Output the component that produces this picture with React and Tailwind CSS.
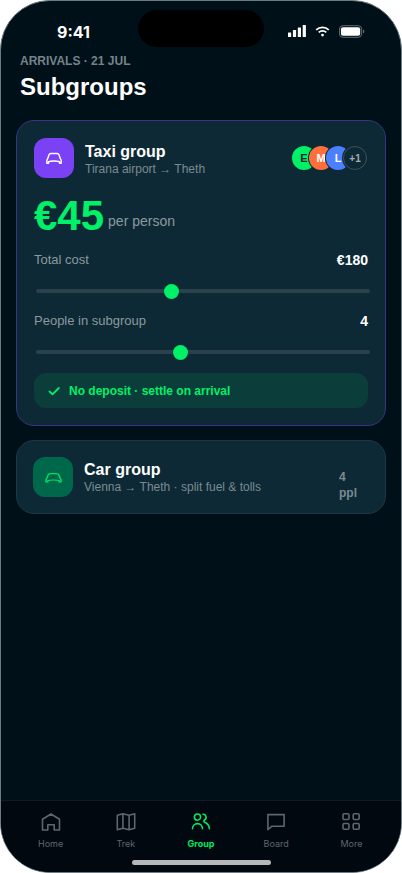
import React, { useState } from 'react';

const CarIcon = ({ className }) => (
    <svg viewBox="0 0 24 24" preserveAspectRatio="none" fill="none" stroke="currentColor" strokeWidth="1.7" strokeLinejoin="round" className={className}>
        <path d="M3.400 18.200v-2.600c0-1.200.4-2 1-2.800L6 8.200c.3-1 1.200-1.700 2.300-1.700h7.400c1.100 0 2 .7 2.300 1.700l1.600 4.600c.6.8 1 1.600 1 2.800v2.600h-2v-1.700c-2-.9-4-1-6.600-1s-4.600.1-6.600 1v1.700z" />
    </svg>
);

const HomeIcon = () => (
    <path d="M2.500 9.300 11 4l8.500 5.300V20h-5.300v-5.200H7.800V20H2.500z" />
);

const TrekIcon = () => (
    <path d="M2.300 5.200 7.900 3.700l6.200 1.500 5.600-1.500v14.600l-5.600 1.500-6.200-1.500-5.600 1.500zM7.900 3.700v14.600M14.100 5.200v14.600" />
);

const GroupIcon = () => (
    <path d="M7.500 10.200a3.100 3.100 0 1 0 0-6.200 3.100 3.100 0 0 0 0 6.200M2.500 18.800c0-3 2.200-5.200 5-5.200s5 2.200 5 5.200M13 4.300a3 3 0 0 1 1.400 5.700c-.7.5-.6 1.700.2 2.300 2.800 1 4.600 3.400 4.800 6.500" />
);

const BoardIcon = () => <path d="M2.900 4.600h16.200v11.600H7L2.900 19.600z" />;

const MoreIcon = () => (
    <>
        <rect x="3" y="3.700" width="6" height="5.800" rx="1.300" />
        <rect x="13.200" y="3.700" width="6" height="5.800" rx="1.300" />
        <rect x="3" y="13.500" width="6" height="5.800" rx="1.300" />
        <rect x="13.200" y="13.500" width="6" height="5.800" rx="1.300" />
    </>
);

const tabs = [
    { name: 'Home', Icon: HomeIcon },
    { name: 'Trek', Icon: TrekIcon },
    { name: 'Group', Icon: GroupIcon },
    { name: 'Board', Icon: BoardIcon },
    { name: 'More', Icon: MoreIcon },
];

const avatars = [
    { label: 'E', color: 'text-[11px] bg-[#00f068] text-[#062430]' },
    { label: 'M', color: 'text-[11px] bg-[#ff6f3c] text-white' },
    { label: 'L', color: 'text-[11px] bg-[#4a80ff] text-white' },
    { label: '+1', color: 'text-[10px] bg-[#0d2935] text-[#a3adb1] border border-[#3f535c]' },
];

const StatusBar = () => (
    <div className="grid grid-cols-[1fr_126px_1fr] pt-[9px] h-[50px]">
        <span className="pt-3 text-center text-base leading-5 font-bold font-['Inter',sans-serif] pl-2">9:41</span>
        <div className="h-[37px] rounded-full bg-black" />
        <div className="flex items-center justify-center gap-[9px] h-[42px] pr-3">
            <svg viewBox="0 0 18 12" className="w-[18px] h-3" fill="currentColor">
                <rect x="0" y="7.500" width="3.200" height="4.500" rx="0.500" />
                <rect x="4.900" y="5" width="3.200" height="7" rx="0.500" />
                <rect x="9.800" y="2.500" width="3.200" height="9.500" rx="0.500" />
                <rect x="14.700" y="0" width="3.200" height="12" rx="0.500" />
            </svg>
            <svg viewBox="0 0 16 12" className="w-[15px] h-3" fill="none" stroke="currentColor" strokeWidth="1.800">
                <path d="M1.300 4.800a9.600 9.600 0 0 1 13.400 0M4 7.500a5.700 5.700 0 0 1 8 0" />
                <circle cx="8" cy="10.300" r="1.500" fill="currentColor" stroke="none" />
            </svg>
            <svg viewBox="0 0 27 13" className="w-[26px] h-[13px]" fill="none">
                <rect x="0.500" y="0.500" width="23" height="12" rx="3.500" stroke="#66737a" />
                <rect x="2" y="2" width="20" height="9" rx="2.200" fill="currentColor" />
                <path d="M25 4.500v4c.8-.3 1.300-1.100 1.300-2s-.5-1.700-1.300-2" fill="#66737a" />
            </svg>
        </div>
    </div>
);

const Arrow = () => <span className="font-['Noto_Sans',sans-serif]">→</span>;

const RangeField = ({ id, label, display, ...range }) => (
    <div>
        <div className="flex items-center justify-between h-5">
            <label htmlFor={id} className="text-[13px] text-[#8b999f]">{label}</label>
            <output htmlFor={id} className="text-sm font-bold text-white">{display}</output>
        </div>
        <input
            id={id}
            type="range"
            className="block w-full ml-0.5 mt-[13px] h-4 appearance-none bg-transparent [&::-webkit-slider-runnable-track]:h-1 [&::-webkit-slider-runnable-track]:rounded-full [&::-webkit-slider-runnable-track]:bg-[#2b424d] [&::-webkit-slider-thumb]:appearance-none [&::-webkit-slider-thumb]:size-[15px] [&::-webkit-slider-thumb]:-mt-[5px] [&::-webkit-slider-thumb]:rounded-full [&::-webkit-slider-thumb]:bg-[#00f068]"
            {...range}
        />
    </div>
);

const TaxiCard = () => {
    const [total, setTotal] = useState(180);
    const [people, setPeople] = useState(4);

    return (
        <section className="rounded-[18px] border border-[#3a3484] bg-[#0d2935] p-[17px]">
            <div className="flex items-center gap-[11px]">
                <div className="size-10 rounded-xl bg-[#7b42f5] flex items-center justify-center">
                    <CarIcon className="size-5 text-white" />
                </div>
                <div className="flex-1">
                    <h2 className="text-base leading-[21px] font-bold">Taxi group</h2>
                    <p className="text-xs leading-[14px] text-[#7b8b92]">Tirana airport <Arrow /> Theth</p>
                </div>
                <div className="flex mr-px">
                    {avatars.map(({ label, color }) => (
                        <span
                            key={label}
                            className={`size-6 -ml-[7px] rounded-full ring-1 ring-[#0d2935] flex items-center justify-center font-bold ${color}`}
                        >
                            {label}
                        </span>
                    ))}
                </div>
            </div>

            <div className="flex items-end gap-1 mt-[13px]">
                <span className="text-[42px] leading-[50px] font-bold text-[#00f068]">€{Math.round(total / people)}</span>
                <span className="pb-[10px] text-sm leading-5 text-[#8b999f]">per person</span>
            </div>

            <div className="flex flex-col gap-3 mt-[9px]">
                <RangeField id="total" label="Total cost" display={`€${total}`} min={60} max={360} value={total} onChange={(e) => setTotal(Number(e.target.value))} />
                <RangeField id="people" label="People in subgroup" display={people} min={1} max={8} value={people} onChange={(e) => setPeople(Number(e.target.value))} />
            </div>

            <div className="mt-[13px] h-[35px] rounded-xl bg-[#0b3d3b] px-[14px] flex items-center gap-[9px] text-xs font-bold text-[#00f068]">
                <svg viewBox="0 0 12 12" className="size-3" fill="none" stroke="currentColor" strokeWidth="1.800" strokeLinecap="round" strokeLinejoin="round">
                    <path d="M1.500 6.500 4.500 9.300 10.800 3" />
                </svg>
                No deposit · settle on arrival
            </div>
        </section>
    );
};

const CarCard = () => (
    <section className="rounded-[18px] border border-[#1c3a45] bg-[#0d2935] p-4">
        <div className="flex h-10 gap-[11px]">
            <div className="size-10 rounded-xl bg-[#00684a] flex items-center justify-center">
                <CarIcon className="w-[21px] h-[17px] text-[#00e065]" />
            </div>
            <div className="flex-1 pt-0.5">
                <h2 className="text-base leading-[21px] font-bold">Car group</h2>
                <p className="text-xs leading-[14px] text-[#7b8b92]">Vienna <Arrow /> Theth · split fuel &amp; tolls</p>
            </div>
            <span className="w-[30px] pr-2 mt-3 text-xs leading-4 font-bold text-[#7b8b92]">4 ppl</span>
        </div>
    </section>
);

const TabBar = () => (
    <nav className="border-t border-[#141c23] bg-[#01080f] px-3 pt-[9px] pb-[7px]">
        <div className="grid grid-cols-5">
            {tabs.map(({ name, Icon }) => (
                <button
                    key={name}
                    type="button"
                    className={`flex flex-col items-center gap-1 text-[9px] leading-4 font-['Inter',sans-serif] ${name === 'Group' ? 'font-bold text-[#00e865]' : 'text-[#5f676d]'}`}
                >
                    <svg viewBox="0 0 22 22" className="size-[22px]" fill="none" stroke="currentColor" strokeWidth="1.600" strokeLinecap="round" strokeLinejoin="round">
                        <Icon />
                    </svg>
                    {name}
                </button>
            ))}
        </div>
        {/* Home indicator */}
        <div className="mx-auto mt-2 h-[5px] w-[139px] rounded-full bg-[#b5b8ba]" />
    </nav>
);

const App = () => {
    return (
        <div className="min-h-screen bg-white flex flex-col">
            <div className="flex-1 flex flex-col overflow-hidden rounded-[50px] border border-[#6f7b82] bg-[#001018] text-white font-['Liberation_Sans',Arial,sans-serif]">
                <StatusBar />
                <header className="px-[19px]">
                    <p className="text-xs leading-5 font-bold text-[#75838a]">ARRIVALS · 21 JUL</p>
                    <h1 className="text-2xl leading-8 font-bold">Subgroups</h1>
                </header>
                <main className="flex-1 flex flex-col gap-[14px] px-[15px] pt-[17px]">
                    <TaxiCard />
                    <CarCard />
                </main>
                <TabBar />
            </div>
        </div>
    );
};

export default App;
